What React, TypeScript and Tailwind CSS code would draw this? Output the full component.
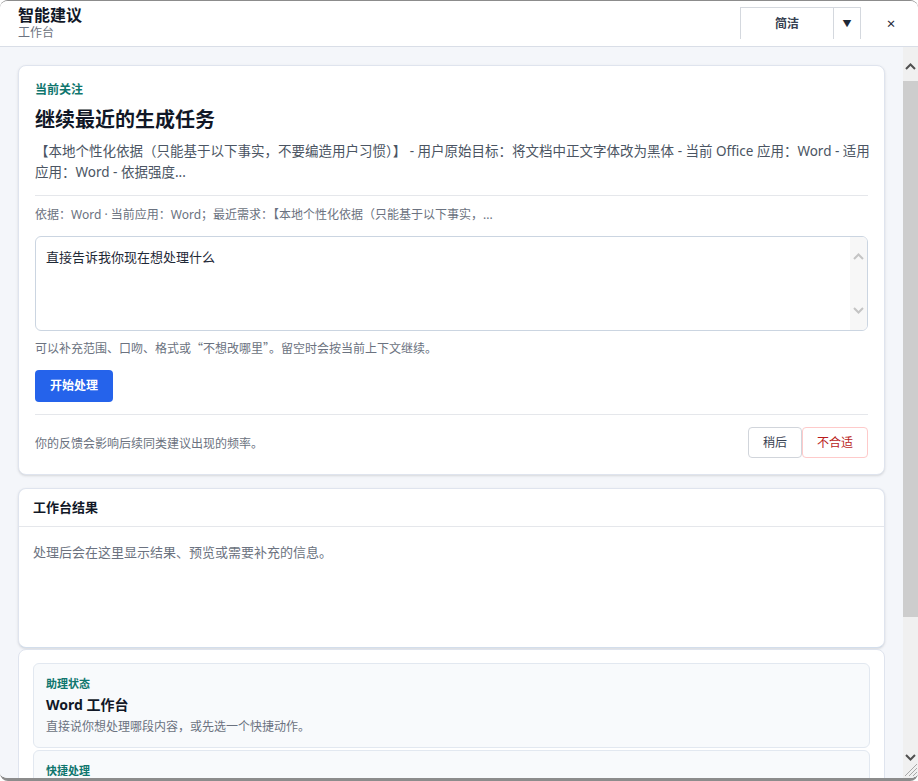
import React from "react";

const Chevron = ({ dir, className }: { dir: "up" | "down"; className?: string }) => (
  <svg width="11" height="7" viewBox="0 0 11 7" className={className}>
    <polyline
      points={dir === "up" ? "1,6 5.5,1.5 10,6" : "1,1 5.5,5.5 10,1"}
      fill="none"
      stroke="currentColor"
      strokeWidth="2"
    />
  </svg>
);

const Grip = () => (
  <svg width="14" height="14" viewBox="0 0 14 14" className="text-[#a8a8a8]">
    <line x1="13" y1="1" x2="1" y2="13" stroke="currentColor" strokeWidth="1" />
    <line x1="13" y1="5" x2="5" y2="13" stroke="currentColor" strokeWidth="1" />
    <line x1="13" y1="9" x2="9" y2="13" stroke="currentColor" strokeWidth="1" />
  </svg>
);

const SuggestionCard = () => (
  <div className="rounded-lg border border-[#dfe4ee] bg-white px-4 pt-4 pb-4 shadow-sm">
    <div className="text-[12px] leading-[16px] font-bold text-[#0f766e]">当前关注</div>
    <h2 className="mt-[8px] text-[20px] leading-[28px] font-bold text-[#111827]">继续最近的生成任务</h2>
    <p className="mt-[7px] text-[13.5px] leading-[21px] text-[#4b5563]">
      <span className="block whitespace-nowrap">
        【本地个性化依据（只能基于以下事实，不要编造用户习惯）】 - 用户原始目标：将文档中正文字体改为黑体 - 当前 Office 应用：Word - 适用
      </span>
      <span className="block">应用：Word - 依据强度...</span>
    </p>
    <div className="mt-3 border-t border-[#e5e7eb]" />
    <div className="mt-[10px] text-[12px] leading-[18px] text-[#6b7280]">
      依据：Word · 当前应用：Word；最近需求：【本地个性化依据（只能基于以下事实，...
    </div>
    <div className="mt-3 flex h-[95px] overflow-hidden rounded-md border border-[#cbd5e1] bg-white">
      <textarea
        className="flex-1 resize-none px-[10px] py-[10px] text-[13px] leading-[20px] text-[#1f2937] outline-none"
        defaultValue="直接告诉我你现在想处理什么"
      />
      <div className="flex w-[17px] flex-col items-center justify-between bg-[#f7f7f7] py-[16px] text-[#c4c4c4]">
        <Chevron dir="up" />
        <Chevron dir="down" />
      </div>
    </div>
    <div className="mt-[8px] font-['Noto_Sans_CJK_SC',sans-serif] text-[12px] leading-[18px] text-[#6b7280]">
      可以补充范围、口吻、格式或“不想改哪里”。留空时会按当前上下文继续。
    </div>
    <button className="mt-[13px] h-[32px] rounded bg-[#2563eb] px-[15px] text-[12px] font-bold text-white">
      开始处理
    </button>
    <div className="mt-3 border-t border-[#e5e7eb]" />
    <div className="mt-3 flex items-center justify-between">
      <span className="pt-[2px] text-[12px] leading-[18px] text-[#6b7280]">你的反馈会影响后续同类建议出现的频率。</span>
      <div className="flex">
        <button className="h-[31px] rounded border border-[#d1d5db] bg-white px-[14px] text-[12px] text-[#374151]">
          稍后
        </button>
        <button className="h-[31px] rounded border border-[#fecaca] bg-white px-[14px] text-[12px] text-[#b91c1c]">
          不合适
        </button>
      </div>
    </div>
  </div>
);

const ResultCard = () => (
  <div className="mt-[13px] rounded-lg border border-[#dfe4ee] border-b-[#d3deec] bg-white shadow-sm">
    <div className="flex h-[38px] items-center border-b border-[#e5e7eb] px-[14px] text-[13px] font-bold text-[#111827]">
      工作台结果
    </div>
    <div className="h-[120px] px-[14px] pt-[15px] text-[13px] leading-[20px] text-[#6b7280]">
      处理后会在这里显示结果、预览或需要补充的信息。
    </div>
  </div>
);

const StatusCard = () => (
  <div className="mt-[1px] rounded-lg border border-[#dfe4ee] bg-white px-[14px] pt-[13px] pb-4">
    <div className="rounded-md border border-[#e2e8f0] bg-[#f8fafc] px-[12px] pt-[12px] pb-[11px]">
      <div className="text-[11px] leading-[16px] font-bold text-[#0f766e]">助理状态</div>
      <div className="mt-[3px] text-[14px] leading-[20px] font-bold text-[#111827]">Word 工作台</div>
      <div className="mt-[3px] text-[12px] leading-[18px] text-[#6b7280]">直接说你想处理哪段内容，或先选一个快捷动作。</div>
    </div>
    <div className="mt-[2px] rounded-md border border-[#e2e8f0] bg-[#f8fafc] px-[12px] pt-[12px] pb-[11px]">
      <div className="text-[11px] leading-[16px] font-bold text-[#0f766e]">快捷处理</div>
      <div className="mt-[3px] h-[60px]" />
    </div>
  </div>
);

export default function App() {
  return (
    <div className="flex h-[781px] w-[918px] flex-col overflow-hidden rounded-lg border-t border-b-[3px] border-[#8c8c8c] bg-white font-['Noto_Sans','Noto_Sans_CJK_SC',sans-serif]">
      {/* Header */}
      <div className="flex h-[46px] shrink-0 items-start border-b border-[#d9dee7] bg-white pl-[18px] pr-[12px]">
        <div className="flex-1 pt-[4px]">
          <div className="text-[16px] leading-[20px] font-bold text-[#111827]">智能建议</div>
          <div className="mt-[1px] text-[12px] leading-[14px] text-[#6b7280]">工作台</div>
        </div>
        <div className="mt-[6px] flex h-[32px] border border-b-0 border-[#d4d8de] bg-white">
          <div className="flex w-[92px] items-center justify-center text-[12px] font-bold text-[#374151]">简洁</div>
          <div className="flex w-[27px] items-center justify-center border-l border-[#d4d8de] text-[9px] text-[#1f2937]">
            ▼
          </div>
        </div>
        <button className="mt-[6px] ml-[15px] flex h-[32px] w-[30px] items-center justify-center text-[15px] text-[#1f2937]">
          ×
        </button>
      </div>

      {/* Body */}
      <div className="flex min-h-0 flex-1 bg-[#f4f6fa]">
        <div className="min-w-0 flex-1 overflow-hidden px-[18px] pt-[18px]">
          <SuggestionCard />
          <ResultCard />
          <StatusCard />
        </div>
        <div className="flex w-[15px] flex-col bg-[#f0f0f0]">
          <div className="flex h-[34px] justify-center pt-[16px] text-[#505050]">
            <Chevron dir="up" />
          </div>
          <div className="h-[536px] bg-[#cdcdcd]" />
          <div className="flex-1" />
          <div className="flex justify-center pb-[2px] text-[#505050]">
            <Chevron dir="down" />
          </div>
          <div className="flex h-[15px] justify-end">
            <Grip />
          </div>
        </div>
      </div>
    </div>
  );
}
